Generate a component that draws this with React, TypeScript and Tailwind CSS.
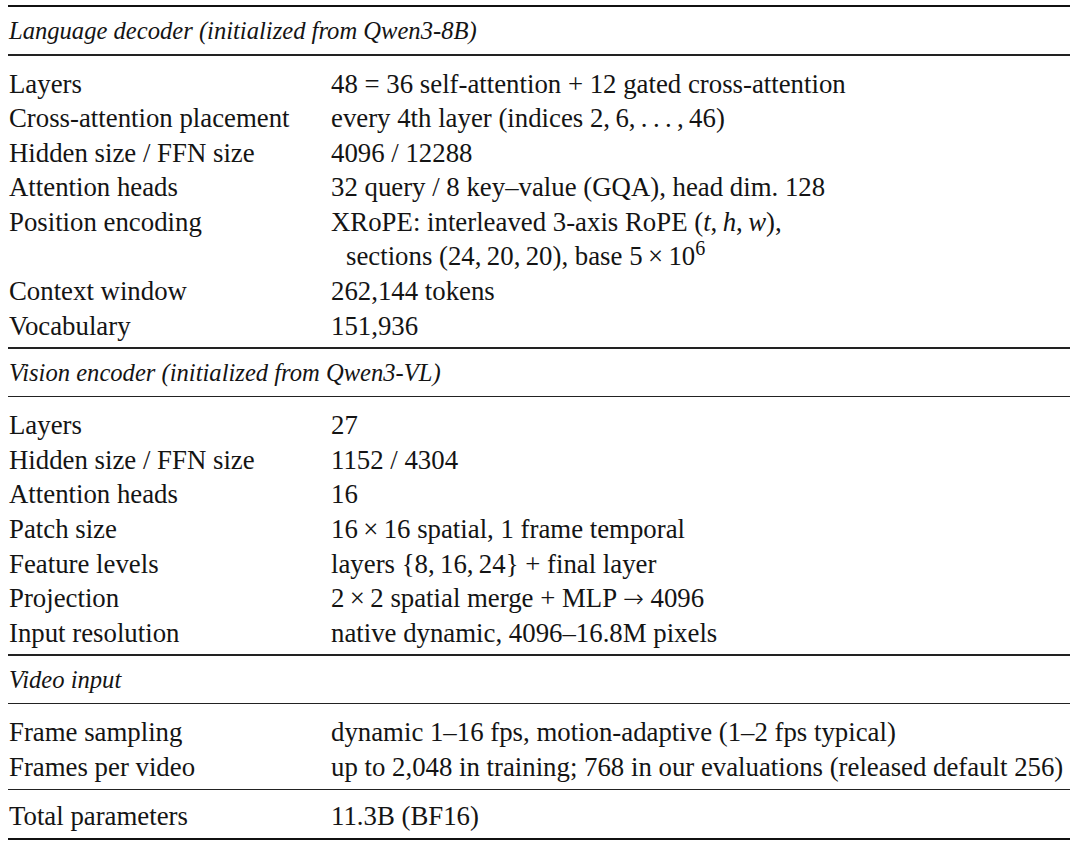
import type { ReactNode } from "react";

type Row = {
  label: string;
  value: ReactNode;
  indent?: boolean;
};

type Section = {
  title?: string;
  rows: Row[];
};

const thin = "\u2009";

const sections: Section[] = [
  {
    title: "Language decoder (initialized from Qwen3-8B)",
    rows: [
      { label: "Layers", value: "48 = 36 self-attention + 12 gated cross-attention" },
      {
        label: "Cross-attention placement",
        value: `every 4th layer (indices 2,${thin}6,${thin}.${thin}.${thin}.${thin},${thin}46)`,
      },
      { label: "Hidden size / FFN size", value: "4096 / 12288" },
      { label: "Attention heads", value: "32 query / 8 key–value (GQA), head dim. 128" },
      {
        label: "Position encoding",
        value: (
          <>
            XRoPE: interleaved 3-axis RoPE (<i>t</i>,{thin}
            <i>h</i>,{thin}
            <i>w</i>),
          </>
        ),
      },
      {
        label: "",
        indent: true,
        value: (
          <>
            sections (24,{thin}20,{thin}20), base 5{thin}×{thin}10<sup>6</sup>
          </>
        ),
      },
      { label: "Context window", value: "262,144 tokens" },
      { label: "Vocabulary", value: "151,936" },
    ],
  },
  {
    title: "Vision encoder (initialized from Qwen3-VL)",
    rows: [
      { label: "Layers", value: "27" },
      { label: "Hidden size / FFN size", value: "1152 / 4304" },
      { label: "Attention heads", value: "16" },
      { label: "Patch size", value: `16${thin}×${thin}16 spatial, 1 frame temporal` },
      { label: "Feature levels", value: `layers {8,${thin}16,${thin}24} + final layer` },
      {
        label: "Projection",
        value: (
          <>
            2{thin}×{thin}2 spatial merge + MLP{" "}
            <span className="font-['DejaVu_Sans',sans-serif] text-[25px] leading-none font-light">→</span> 4096
          </>
        ),
      },
      { label: "Input resolution", value: "native dynamic, 4096–16.8M pixels" },
    ],
  },
  {
    title: "Video input",
    rows: [
      { label: "Frame sampling", value: "dynamic 1–16 fps, motion-adaptive (1–2 fps typical)" },
      {
        label: "Frames per video",
        value: "up to 2,048 in training; 768 in our evaluations (released default 256)",
      },
    ],
  },
  {
    rows: [{ label: "Total parameters", value: "11.3B (BF16)" }],
  },
];

function Rule({ thick }: { thick?: boolean }) {
  return <div className={thick ? "h-[2px] bg-[#111]" : "h-[1.5px] bg-[#222]"} />;
}

function Rows({ rows, last }: { rows: Row[]; last?: boolean }) {
  return (
    <div className={last ? "pt-[9px] pb-[4px]" : "pt-[11px] pb-[4px]"}>
      {rows.map((row, i) => (
        <div key={i} className="grid grid-cols-[322px_1fr] h-[34.6px] pl-[1px] leading-[34.6px] whitespace-nowrap">
          <div>{row.label}</div>
          <div className={row.indent ? "pl-[15px]" : ""}>{row.value}</div>
        </div>
      ))}
    </div>
  );
}

export default function App() {
  return (
    <div className="w-[1070px] h-[843px] overflow-hidden bg-white pt-[5px] pl-[8px] text-[26.8px] text-[#141414] font-['Liberation_Serif','DejaVu_Serif',serif]">
      <Rule thick />
      {sections.map((section, i) => (
        <div key={i}>
          {section.title && (
            <>
              <div className="py-[6px] pl-[1px] leading-[35px] italic text-[24.6px]">{section.title}</div>
              <Rule />
            </>
          )}
          <Rows rows={section.rows} last={!section.title} />
          <Rule thick={i === sections.length - 1} />
        </div>
      ))}
    </div>
  );
}
